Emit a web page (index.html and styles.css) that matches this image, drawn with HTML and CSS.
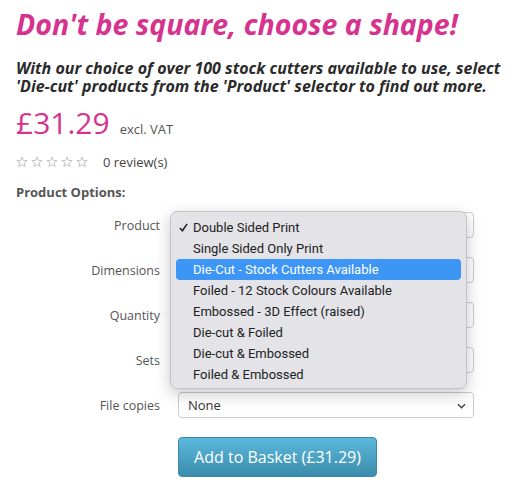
FILE: index.html
```html
<!DOCTYPE html>
<html lang="en">
<head>
<meta charset="utf-8">
<title>Don't be square</title>
<link rel="stylesheet" href="styles.css">
</head>
<body>
<div class="page">
  <h1 class="title">Don't be square, choose a shape!</h1>
  <p class="intro">With our choice of over 100 stock cutters available to use, select 'Die-cut' products from the 'Product' selector to find out more.</p>
  <div class="price-row"><span class="price">£31.29</span><span class="vat">excl. VAT</span></div>
  <div class="reviews">
    <span class="stars">
      <svg viewBox="0 0 12 12" class="star"><path d="M6 0.8 L7.3 4.4 L11.2 4.5 L8.1 6.9 L9.2 10.7 L6 8.5 L2.8 10.7 L3.9 6.9 L0.8 4.5 L4.7 4.4 Z"/></svg>
      <svg viewBox="0 0 12 12" class="star"><path d="M6 0.8 L7.3 4.4 L11.2 4.5 L8.1 6.9 L9.2 10.7 L6 8.5 L2.8 10.7 L3.9 6.9 L0.8 4.5 L4.7 4.4 Z"/></svg>
      <svg viewBox="0 0 12 12" class="star"><path d="M6 0.8 L7.3 4.4 L11.2 4.5 L8.1 6.9 L9.2 10.7 L6 8.5 L2.8 10.7 L3.9 6.9 L0.8 4.5 L4.7 4.4 Z"/></svg>
      <svg viewBox="0 0 12 12" class="star"><path d="M6 0.8 L7.3 4.4 L11.2 4.5 L8.1 6.9 L9.2 10.7 L6 8.5 L2.8 10.7 L3.9 6.9 L0.8 4.5 L4.7 4.4 Z"/></svg>
      <svg viewBox="0 0 12 12" class="star"><path d="M6 0.8 L7.3 4.4 L11.2 4.5 L8.1 6.9 L9.2 10.7 L6 8.5 L2.8 10.7 L3.9 6.9 L0.8 4.5 L4.7 4.4 Z"/></svg>
    </span>
    <span class="review-count">0 review(s)</span>
  </div>
  <div class="options-heading">Product Options:</div>

  <div class="form">
    <div class="row">
      <label class="label">Product</label>
      <div class="select"><svg class="chev" viewBox="0 0 10 6"><path d="M1 1 L5 5 L9 1"/></svg></div>
    </div>
    <div class="row">
      <label class="label">Dimensions</label>
      <div class="select"><svg class="chev" viewBox="0 0 10 6"><path d="M1 1 L5 5 L9 1"/></svg></div>
    </div>
    <div class="row">
      <label class="label">Quantity</label>
      <div class="select"><svg class="chev" viewBox="0 0 10 6"><path d="M1 1 L5 5 L9 1"/></svg></div>
    </div>
    <div class="row">
      <label class="label">Sets</label>
      <div class="select"><svg class="chev" viewBox="0 0 10 6"><path d="M1 1 L5 5 L9 1"/></svg></div>
    </div>
    <div class="row">
      <label class="label">File copies</label>
      <div class="select">None<svg class="chev" viewBox="0 0 10 6"><path d="M1 1 L5 5 L9 1"/></svg></div>
    </div>
    <div class="row">
      <span class="label"></span>
      <button class="basket">Add to Basket (£31.29)</button>
    </div>

    <ul class="popup">
      <li class="opt checked"><svg class="tick" viewBox="0 0 10 10"><path d="M1 5.6 L3.8 8.6 L9 1"/></svg>Double Sided Print</li>
      <li class="opt">Single Sided Only Print</li>
      <li class="opt active">Die-Cut - Stock Cutters Available</li>
      <li class="opt">Foiled - 12 Stock Colours Available</li>
      <li class="opt">Embossed - 3D Effect (raised)</li>
      <li class="opt">Die-cut &amp; Foiled</li>
      <li class="opt">Die-cut &amp; Embossed</li>
      <li class="opt">Foiled &amp; Embossed</li>
    </ul>
  </div>
</div>
</body>
</html>
```

FILE: styles.css
```css
* { box-sizing: border-box; }
html, body { margin: 0; padding: 0; background: #fff; }
body {
  font-family: "Open Sans", "Liberation Sans", sans-serif;
  color: #333;
}
.page { padding: 0 16px; }

.title {
  margin: 7px 0 0 0;
  font-size: 28.5px;
  line-height: 34px;
  font-weight: 700;
  font-style: italic;
  color: #d6338f;
}
.intro {
  margin: 18px 0 0 0;
  font-size: 16px;
  line-height: 18px;
  font-weight: 700;
  font-style: italic;
  color: #2b2b2b;
}
.price-row {
  margin-top: 10px;
  display: flex;
  align-items: baseline;
  gap: 10px;
  height: 36px;
}
.price {
  font-size: 30px;
  line-height: 36px;
  color: #d6338f;
}
.vat {
  font-size: 13px;
  line-height: 1;
  color: #555;
}
.reviews {
  margin-top: 12px;
  display: flex;
  align-items: center;
  height: 18px;
}
.stars { display: flex; gap: 3px; width: 87px; }
.star {
  width: 12px;
  height: 12px;
  fill: none;
  stroke: #c4c4c4;
  stroke-width: 1;
  stroke-linejoin: round;
}
.review-count {
  font-size: 13px;
  line-height: 18px;
  color: #444;
}
.options-heading {
  margin-top: 12px;
  font-size: 13px;
  line-height: 18px;
  font-weight: 700;
  color: #555;
}

.form {
  position: relative;
  margin-top: 11px;
  display: flex;
  flex-direction: column;
  gap: 19px;
}
.row {
  display: flex;
  align-items: center;
  gap: 18px;
}
.label {
  width: 144px;
  text-align: right;
  font-size: 12.5px;
  color: #555;
}
.select {
  position: relative;
  width: 296px;
  height: 26px;
  border: 1px solid #cccccc;
  border-radius: 4px;
  background: #fff;
  padding-left: 9px;
  font-size: 13px;
  line-height: 24px;
  color: #333;
}
.chev {
  position: absolute;
  right: 7px;
  top: 10px;
  width: 9px;
  height: 6px;
  fill: none;
  stroke: #444;
  stroke-width: 1.6;
}
.basket {
  width: 199px;
  height: 40px;
  border: 1px solid #3a89a8;
  border-radius: 4px;
  background: linear-gradient(#5cb8dc, #3a8cab);
  color: #fff;
  font-family: "Open Sans", "Liberation Sans", sans-serif;
  font-size: 16px;
  padding: 0;
}

.popup {
  position: absolute;
  left: 154px;
  top: -1px;
  width: 297px;
  height: 178px;
  margin: 0;
  padding: 5px 5px;
  list-style: none;
  background: #e3e3e8;
  border: 1px solid #c4c4c8;
  border-radius: 7px;
  box-shadow: 0 5px 16px rgba(0, 0, 0, 0.22);
  font-family: Roboto, "Liberation Sans", sans-serif;
  font-size: 13px;
  color: #222;
}
.opt {
  position: relative;
  height: 21px;
  line-height: 21px;
  padding-left: 17px;
  border-radius: 4px;
}
.opt.active {
  background: #3d96f6;
  color: #fff;
}
.tick {
  position: absolute;
  left: 3px;
  top: 6px;
  width: 9px;
  height: 9px;
  fill: none;
  stroke: #222;
  stroke-width: 1.7;
}
```
